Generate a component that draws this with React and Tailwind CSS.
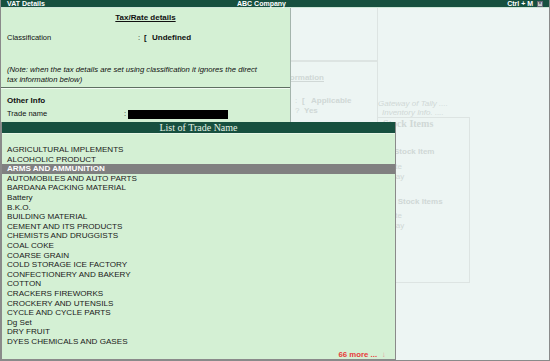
import React from 'react';

const items = [
  'AGRICULTURAL IMPLEMENTS',
  'ALCOHOLIC PRODUCT',
  'ARMS AND AMMUNITION',
  'AUTOMOBILES AND AUTO PARTS',
  'BARDANA PACKING MATERIAL',
  'Battery',
  'B.K.O.',
  'BUILDING MATERIAL',
  'CEMENT AND ITS PRODUCTS',
  'CHEMISTS AND DRUGGISTS',
  'COAL COKE',
  'COARSE GRAIN',
  'COLD STORAGE ICE FACTORY',
  'CONFECTIONERY AND BAKERY',
  'COTTON',
  'CRACKERS FIREWORKS',
  'CROCKERY AND UTENSILS',
  'CYCLE AND CYCLE PARTS',
  'Dg Set',
  'DRY FRUIT',
  'DYES CHEMICALS AND GASES',
];

const sans = { fontFamily: '"Liberation Sans", Arial, sans-serif' };

const App = () => {
  return (
    <div className="w-[550px] h-[361px] overflow-hidden bg-white" style={sans}>
      <div className="relative w-[550px] h-[361px] bg-[#edf5f3] border-l border-r border-b border-[#8a8a8a] flex flex-col">
        {/* title bar */}
        <div className="h-[8px] bg-[#17503f] border-b border-[#cfe6d8] flex items-center px-[6px] text-white font-bold text-[7px] leading-[7px]">
          <span className="w-[230px]">VAT Details</span>
          <span className="flex-1">ABC Company</span>
          <span className="mr-[4px]">Ctrl + M</span>
          <span className="w-[6px] h-[6px] bg-[#c8d0cc] border border-[#667] flex items-center justify-center text-[5px] leading-[5px] text-[#445]">×</span>
        </div>

        {/* faded gateway screen behind */}
        <div className="flex flex-1 text-[#d0d8d6]">
          <div className="w-[377px] border-r border-[#dde4e2]">
            <div className="h-[54px] border-b-2 border-[#dde4e2]"></div>
            <div className="ml-[279px] mt-[11px] text-[8px] leading-[10px] font-bold underline">Information</div>
            <div className="ml-[294px] mt-[13px] text-[8px] leading-[10px] font-bold flex">
              <span className="w-[7px] font-normal">:</span><span className="w-[9px]">[</span><span>Applicable</span>
            </div>
            <div className="ml-[294px] text-[8px] leading-[10px] font-bold flex">
              <span className="w-[9px] font-normal">?</span><span>Yes</span>
            </div>
          </div>
          <div className="w-[92px]">
            <div className="mt-[92px] text-[8px] leading-[8px] italic">Gateway of Tally ....</div>
            <div className="ml-[4px] text-[8px] leading-[9px] italic">Inventory Info. ....</div>
            <div className="border border-[#dde4e2] h-[166px] ml-[-1px]">
              <div className="ml-[5px] text-[10px] leading-[12px] font-bold" style={{ fontFamily: '"Liberation Serif", serif' }}>Stock Items</div>
              <div className="mt-[17px] ml-[16px] text-[8px] leading-[10px] font-bold">Stock Item</div>
              <div className="mt-[5px] ml-[0px] text-[8px] leading-[10px]">Create</div>
              <div className="ml-[0px] text-[8px] leading-[10px]">Display</div>
              <div className="mt-[15px] ml-[13px] text-[8px] leading-[10px] font-bold">e Stock Items</div>
              <div className="mt-[4px] ml-[0px] text-[8px] leading-[10px]">Create</div>
              <div className="ml-[0px] text-[8px] leading-[10px]">Display</div>
            </div>
          </div>
        </div>

        {/* VAT details panel */}
        <div className="absolute left-0 top-[8px] bottom-0 w-[290px] bg-[#d4f0d4] border-r border-[#a4b4ac] text-[#111]">
          <div className="mt-[5px] text-center text-[8px] leading-[10px] font-bold">
            <span className="underline underline-offset-1">Tax/Rate details</span>
          </div>
          <div className="mt-[10px] flex text-[7.5px] leading-[10px] pl-[6px]">
            <span className="w-[131px]">Classification</span>
            <span className="w-[6px]">:</span>
            <span className="w-[8px] font-bold text-[8px]">[</span>
            <span className="font-bold text-[8px]">Undefined</span>
          </div>
          <div className="mt-[22px] pl-[6px] text-[7.7px] leading-[10px] italic">
            (Note: when the tax details are set using classification it ignores the direct<br />tax information below)
          </div>
          <div className="mt-[2px] border-t border-[#5f6f62] border-b border-b-[#f2fbf2]"></div>
          <div className="mt-[7px] pl-[6px] text-[8px] leading-[10px] font-bold">Other Info</div>
          <div className="mt-[3px] flex items-start text-[7.5px] leading-[10px] pl-[6px]">
            <span className="w-[117px]">Trade name</span>
            <span className="w-[4px]">:</span>
            <span className="mt-[1px] w-[100px] h-[9px] bg-black"></span>
          </div>
        </div>

        {/* list popup */}
        <div className="absolute left-0 top-[122px] bottom-0 w-[395px] bg-[#d4f0d4] border-l border-r border-b border-[#8a8a8a] flex flex-col">
          <div className="h-[12px] bg-[#17503f] border-b border-[#e6f6e6] text-center text-[10px] leading-[11px] text-[#e4f2e4]" style={{ fontFamily: '"Liberation Serif", serif' }}>
            List of Trade Name
          </div>
          <div className="mt-[11px]">
            {items.map((item, index) => (
              <div
                key={index}
                className={index === 2
                  ? 'h-[9.6px] pl-[5px] text-[8.1px] leading-[9.6px] bg-[#808080] text-white font-bold'
                  : 'h-[9.6px] pl-[5px] text-[8.1px] leading-[9.6px] text-[#1a1a1a]'}
              >
                {item}
              </div>
            ))}
          </div>
          <div className="mt-auto flex justify-end pr-[9px] text-[7.8px] leading-[8px] font-bold text-[#e83a3a]">
            <span>66 more ...</span>
            <span className="ml-[5px] font-normal text-[#e79a9a]">↓</span>
          </div>
        </div>
      </div>
    </div>
  );
};

export default App;
